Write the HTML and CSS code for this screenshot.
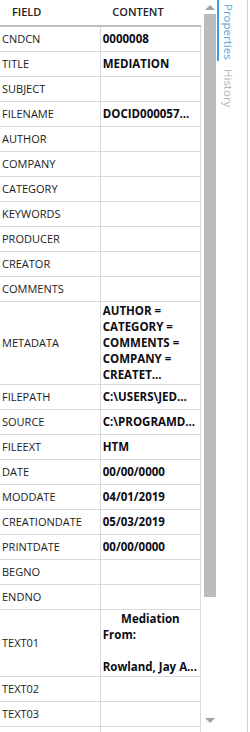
FILE: index.html
```html
<!DOCTYPE html>
<html lang="en">
<head>
    <meta charset="UTF-8">
    <title>Properties</title>
    <link rel="stylesheet" href="styles.css">
</head>
<body>
    <div class="panel">
        <div class="grid">
            <table>
                <thead>
                    <tr><th>FIELD</th><th>CONTENT</th></tr>
                </thead>
                <tbody>
                    <tr><td>CNDCN</td><td class="val">0000008</td></tr>
                    <tr><td>TITLE</td><td class="val">MEDIATION</td></tr>
                    <tr><td>SUBJECT</td><td class="val"></td></tr>
                    <tr><td>FILENAME</td><td class="val">DOCID000057...</td></tr>
                    <tr><td>AUTHOR</td><td class="val"></td></tr>
                    <tr><td>COMPANY</td><td class="val"></td></tr>
                    <tr><td>CATEGORY</td><td class="val"></td></tr>
                    <tr><td>KEYWORDS</td><td class="val"></td></tr>
                    <tr><td>PRODUCER</td><td class="val"></td></tr>
                    <tr><td>CREATOR</td><td class="val"></td></tr>
                    <tr><td>COMMENTS</td><td class="val"></td></tr>
                    <tr>
                        <td>METADATA</td>
                        <td class="val multi">
                            <div>AUTHOR =</div>
                            <div>CATEGORY =</div>
                            <div>COMMENTS =</div>
                            <div>COMPANY =</div>
                            <div>CREATET...</div>
                        </td>
                    </tr>
                    <tr><td>FILEPATH</td><td class="val">C:\USERS\JED...</td></tr>
                    <tr><td>SOURCE</td><td class="val">C:\PROGRAMD...</td></tr>
                    <tr><td>FILEEXT</td><td class="val">HTM</td></tr>
                    <tr><td>DATE</td><td class="val">00/00/0000</td></tr>
                    <tr><td>MODDATE</td><td class="val">04/01/2019</td></tr>
                    <tr><td>CREATIONDATE</td><td class="val">05/03/2019</td></tr>
                    <tr><td>PRINTDATE</td><td class="val">00/00/0000</td></tr>
                    <tr><td>BEGNO</td><td class="val"></td></tr>
                    <tr><td>ENDNO</td><td class="val"></td></tr>
                    <tr>
                        <td>TEXT01</td>
                        <td class="val multi">
                            <div class="center">Mediation</div>
                            <div>From:</div>
                            <div>&nbsp;</div>
                            <div>Rowland, Jay A...</div>
                        </td>
                    </tr>
                    <tr><td>TEXT02</td><td class="val"></td></tr>
                    <tr><td>TEXT03</td><td class="val"></td></tr>
                    <tr><td></td><td class="val"></td></tr>
                </tbody>
            </table>
        </div>
        <div class="scrollbar">
            <div class="arrow-up"></div>
            <div class="thumb"></div>
            <div class="arrow-down"></div>
        </div>
        <div class="tabs">
            <div class="tab active">Properties</div>
            <div class="tab">History</div>
        </div>
    </div>
</body>
</html>
```

FILE: styles.css
```css
*{
    margin: 0;
    padding: 0;
    box-sizing: border-box;
}
body{
    background: #fff;
    font-family: 'Open Sans', 'Noto Sans', sans-serif;
    font-size: 11px;
    color: #1b1b1b;
    overflow: hidden;
}
.panel{
    display: flex;
    height: 732px;
    overflow: hidden;
}
.grid{
    width: 202px;
    flex: none;
    overflow: hidden;
}
table{
    width: 201px;
    table-layout: fixed;
    border-collapse: collapse;
}
th{
    height: 26px;
    text-align: left;
    padding: 0 0 2px 12px;
    font-weight: 600;
    font-size: 11px;
    color: #222;
    border-bottom: 2px solid #bdbdbd;
}
td{
    height: 25px;
    padding: 0 2px;
    line-height: 16px;
    vertical-align: middle;
    border: 1px solid #dadada;
    border-left: 0;
    white-space: nowrap;
    overflow: hidden;
}
td:first-child{
    width: 101px;
}
.val{
    font-weight: 700;
    font-size: 11.5px;
    color: #0c0c14;
}
.multi{
    padding: 1px 2px;
}
.center{
    text-align: center;
}
.scrollbar{
    width: 15px;
    flex: none;
    display: flex;
    flex-direction: column;
    align-items: center;
}
.arrow-up{
    margin-top: 5px;
    border-left: 5px solid transparent;
    border-right: 5px solid transparent;
    border-bottom: 5px solid #a3a3a3;
}
.thumb{
    width: 12px;
    height: 583px;
    margin-top: 4px;
    background: #bcbcbc;
}
.arrow-down{
    margin-top: auto;
    margin-bottom: 9px;
    border-left: 5px solid transparent;
    border-right: 5px solid transparent;
    border-top: 5px solid #a3a3a3;
}
.tabs{
    width: 31px;
    flex: none;
    border-right: 1px solid #d4d4d4;
}
.tab{
    writing-mode: vertical-rl;
    font-size: 11.5px;
    color: #b3b3b3;
    padding: 8px 0 4px 2px;
    border-left: 2px solid transparent;
}
.tab.active{
    height: 61px;
    padding-top: 4px;
    color: #5aa2de;
    border-left-color: #3c9de6;
}
```
